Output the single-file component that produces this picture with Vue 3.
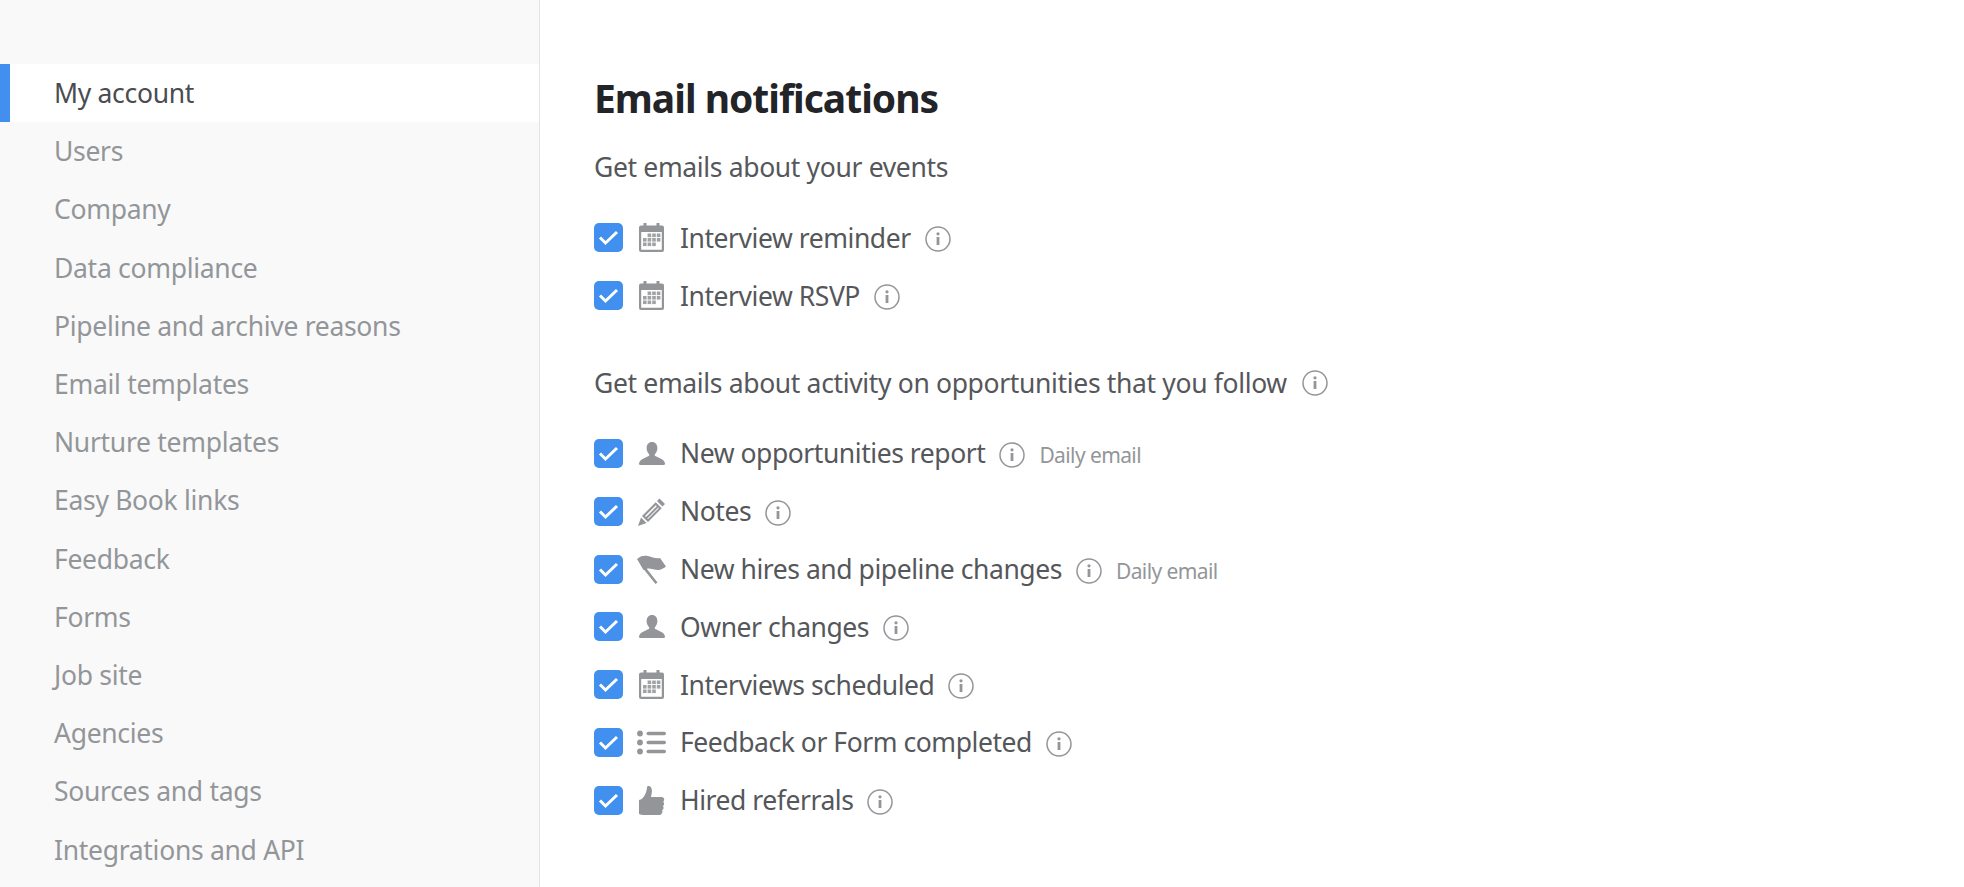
<template>
  <div class="page">
    <nav class="sidebar">
      <a
        v-for="(item, i) in menu"
        :key="item"
        class="nav-item"
        :class="{ active: i === 0 }"
      >{{ item }}</a>
    </nav>

    <main class="content">
      <h1 class="title">Email notifications</h1>

      <template v-for="group in groups" :key="group.title">
        <p class="group-title">
          {{ group.title }}
          <svg v-if="group.info" class="info" viewBox="0 0 26 26">
            <circle cx="13" cy="13" r="12" />
            <rect x="11.6" y="11" width="2.8" height="8" />
            <circle class="dot" cx="13" cy="7.8" r="1.6" />
          </svg>
        </p>

        <ul class="rows">
          <li v-for="row in group.rows" :key="row.label" class="row">
            <span class="check">
              <svg viewBox="0 0 29 29"><path d="M6 14.5l5.5 5.5L23 9" /></svg>
            </span>

            <svg class="type-icon" viewBox="0 0 29 29">
              <g v-if="row.icon === 'calendar'">
                <path fill-rule="evenodd" d="M4 2.5h2.500V0h3v2.500h10V0h3v2.500H25a2 2 0 0 1 2 2V27a2 2 0 0 1-2 2H4a2 2 0 0 1-2-2V4.500a2 2 0 0 1 2-2zM4.200 9v17.800h20.600V9z" />
                <rect
                  v-for="c in calendarCells"
                  :key="c.join()"
                  class="cell"
                  :x="c[0]"
                  :y="c[1]"
                  width="3.6"
                  height="3.6"
                />
              </g>
              <path v-else-if="row.icon === 'person'" d="M15 3c3.300 0 5.400 2.600 5.400 6 0 2.500-.9 4.500-2.300 5.900-.6.700-.5 1.700.3 2.200l6 2.900c1.900 1 3.100 2.300 3.700 4.700-.1.700-.5 1.200-1.200 1.200H3.100c-.7 0-1.100-.5-1.200-1.200.6-2.400 1.800-3.700 3.700-4.700l6-2.900c.8-.5.900-1.500.3-2.200C10.500 13.500 9.600 11.500 9.600 9c0-3.400 2.100-6 5.400-6z" />
              <g v-else-if="row.icon === 'pencil'">
                <path d="M22.500 1.500l5.500 5.500-2.500 2.500-5.500-5.500z" />
                <path fill-rule="evenodd" d="M18.700 5.300l6 6L11 25l-6-6zm.1 2.900L8 19l1 1L19.800 9.200zm2.400 2.400L10.400 21.400l.6.600L21.800 11.200z" />
                <path d="M4 20.500l5.500 5.500L1 29z" />
              </g>
              <g v-else-if="row.icon === 'flag'">
                <path d="M0 4C3 1 7 0 11 1c4 1 8 3 12 2l6 8.500c-2 1.500-5 3.500-8 3.500-3 0-8-2-10-1.500-2 .5-3.500 1-4.500 1.500z" />
                <path d="M4.500 11.500l2.300-1.500L20.500 27.500 18.500 29z" />
              </g>
              <g v-else-if="row.icon === 'list'">
                <circle cx="3" cy="5.500" r="2.900" />
                <circle cx="3" cy="14.500" r="2.900" />
                <circle cx="3" cy="23.500" r="2.900" />
                <rect x="9.500" y="3.800" width="19.500" height="3.400" rx="1.700" />
                <rect x="9.500" y="12.800" width="19.500" height="3.400" rx="1.700" />
                <rect x="9.500" y="21.800" width="19.500" height="3.400" rx="1.700" />
              </g>
              <path v-else d="M11.500 0c2 0 3.400 1.900 3.400 4.500 0 2.200-.4 4.600-1 6.500h10.600c1.800 0 2.700 1.200 2.700 2.600 0 1-.4 1.700-1 2.200.6.500.9 1.200.9 2 0 1-.5 1.700-1.200 2.200.5.500.7 1.100.7 1.800 0 1.100-.6 1.900-1.500 2.300.2.300.3.700.3 1.100 0 1.900-1.200 3.800-3 3.800H8c-3 0-5.400-.6-6-1V14c2.500-.7 4.300-2.300 5.600-4.600C9 7 10 3.500 10 1.500 10 .500 10.500 0 11.500 0z" />
            </svg>

            <span class="label">{{ row.label }}</span>

            <svg class="info" viewBox="0 0 26 26">
              <circle cx="13" cy="13" r="12" />
              <rect x="11.600" y="11" width="2.800" height="8" />
              <circle class="dot" cx="13" cy="7.800" r="1.600" />
            </svg>

            <span v-if="row.daily" class="daily">Daily email</span>
          </li>
        </ul>
      </template>
    </main>
  </div>
</template>

<script setup>
const menu = [
  'My account',
  'Users',
  'Company',
  'Data compliance',
  'Pipeline and archive reasons',
  'Email templates',
  'Nurture templates',
  'Easy Book links',
  'Feedback',
  'Forms',
  'Job site',
  'Agencies',
  'Sources and tags',
  'Integrations and API',
];

const groups = [
  {
    title: 'Get emails about your events',
    rows: [
      { label: 'Interview reminder', icon: 'calendar' },
      { label: 'Interview RSVP', icon: 'calendar' },
    ],
  },
  {
    title: 'Get emails about activity on opportunities that you follow',
    info: true,
    rows: [
      { label: 'New opportunities report', icon: 'person', daily: true },
      { label: 'Notes', icon: 'pencil' },
      { label: 'New hires and pipeline changes', icon: 'flag', daily: true },
      { label: 'Owner changes', icon: 'person' },
      { label: 'Interviews scheduled', icon: 'calendar' },
      { label: 'Feedback or Form completed', icon: 'list' },
      { label: 'Hired referrals', icon: 'thumb' },
    ],
  },
];

// day squares inside the calendar icon
const calendarCells = [
  [10.6, 10.5], [15.2, 10.5], [19.8, 10.5],
  [6, 15], [10.6, 15], [15.2, 15], [19.8, 15],
  [6, 19.5], [10.6, 19.5], [15.2, 19.5],
];
</script>

<style>
html, body { margin: 0; height: 100%; background: #fff; }
</style>

<style scoped>
.page {
  display: flex; height: 887px; overflow: hidden;
  font-family: "Noto Sans", sans-serif;
  color: #55575b;
}

.sidebar {
  width: 539px; flex-shrink: 0;
  padding-top: 64px;
  background: #f9f9f9;
  border-right: 1px solid #e4e4e4;
}
.nav-item {
  display: flex; align-items: center;
  height: 58.2px; box-sizing: border-box;
  padding-left: 54px;
  font-size: 26.5px; letter-spacing: -.3px;
  color: #939699;
}
.nav-item.active {
  padding-left: 44px;
  background: #fff;
  border-left: 10px solid #418fee;
  color: #4a4c50;
}

.content { flex: 1; padding-left: 54px; }
.title {
  margin: 72px 0 23px; font-size: 39px; line-height: 52px; font-weight: 700;
  letter-spacing: -1px; color: #222428;
}
.group-title {
  display: flex; align-items: center; gap: 15px;
  margin: 0; height: 40px;
  font-size: 26.5px; letter-spacing: -.35px;
}

.rows { list-style: none; margin: 22px 0 38px; padding: 0; }
.row { display: flex; align-items: center; height: 57.8px; font-size: 26.5px; letter-spacing: -.45px; }

.check {
  display: flex; width: 29px; height: 29px; border-radius: 5px;
  background: #418fee; flex-shrink: 0;
}
.check svg { fill: none; stroke: #fff; stroke-width: 3; }

.type-icon { width: 29px; height: 29px; margin-left: 14px; fill: #939598; flex-shrink: 0; }
.type-icon .cell { fill: #a0a2a4; }
.label { margin-left: 14px; }

.info { width: 26px; height: 26px; margin-left: 14px; flex-shrink: 0; fill: #939598; }
.row .info { margin-top: 3px; }
.info > circle:first-child { fill: none; stroke: #939598; stroke-width: 1.5; }
.group-title .info { margin-left: 0; }

.daily { margin: 3px 0 0 14px; font-size: 21px; letter-spacing: -.6px; color: #939699; }
</style>
